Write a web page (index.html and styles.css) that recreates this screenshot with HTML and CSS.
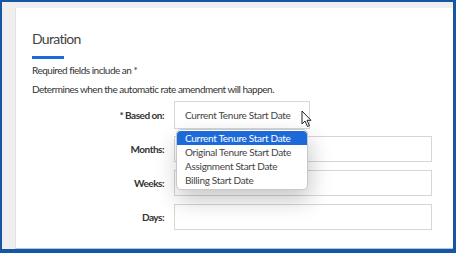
FILE: index.html
```html
<!DOCTYPE html>
<html lang="en">
<head>
  <meta charset="UTF-8" />
  <title>Duration</title>
  <link rel="stylesheet" href="styles.css">
</head>
<body>
  <div class="frame">
    <div class="card">
      <h2 class="title">Duration</h2>
      <div class="title-bar"></div>
      <p class="note">Required fields include an *</p>
      <p class="note">Determines when the automatic rate amendment will happen.</p>

      <div class="form">
        <label class="label">* Based on:</label>
        <div class="select-wrap">
          <div class="select">Current Tenure Start Date</div>
          <svg class="cursor" width="12" height="18" viewBox="0 0 12 18">
            <path d="M1 1 L1 14 L4 11 L6.5 16.5 L8.5 15.6 L6 10.3 L10 10.3 Z" fill="#fff" stroke="#222" stroke-width="1" stroke-linejoin="round"/>
          </svg>
          <ul class="options">
            <li class="active">Current Tenure Start Date</li>
            <li>Original Tenure Start Date</li>
            <li>Assignment Start Date</li>
            <li>Billing Start Date</li>
          </ul>
        </div>

        <label class="label">Months:</label>
        <div class="input"></div>

        <label class="label">Weeks:</label>
        <div class="input"></div>

        <label class="label">Days:</label>
        <div class="input"></div>
      </div>
    </div>
  </div>
</body>
</html>
```

FILE: styles.css
```css
:root {
  --blue-frame: #1656a4;
  --blue: #1c6ad8;
  --text: #333;
  --line: #d6d6d6;
}

* {
  box-sizing: border-box;
  margin: 0;
  padding: 0;
}

body {
  font-family: 'Lato', 'Liberation Sans', sans-serif;
  color: var(--text);
  background: var(--blue-frame);
}

.frame {
  width: 456px;
  height: 253px;
  border: 2px solid var(--blue-frame);
  border-right-width: 3px;
  border-bottom-width: 4px;
  background: #efefef;
  padding: 6px 0 0 13px;
}

.card {
  height: 100%;
  background: #fff;
  border-left: 1px solid #e2e2e2;
  border-bottom: 1px solid #a8c8ee;
  padding: 22px 0 0 16px;
}

.title {
  font-size: 14px;
  font-weight: 400;
  letter-spacing: -0.7px;
  color: #444;
  line-height: 18px;
}

.title-bar {
  width: 32px;
  height: 3px;
  background: var(--blue);
  margin-top: 8px;
}

.note {
  font-size: 10px;
  letter-spacing: -0.5px;
  line-height: 14px;
  margin-top: 4px;
}

.note + .note {
  margin-top: 5px;
}

.form {
  display: grid;
  grid-template-columns: 132px 258px;
  column-gap: 10px;
  row-gap: 8px;
  margin-top: 5px;
}

.label {
  text-align: right;
  font-size: 10px;
  letter-spacing: -0.5px;
  font-weight: 700;
  align-self: center;
}

.select-wrap {
  position: relative;
  height: 27px;
}

.select {
  width: 136px;
  height: 28px;
  border: 1px solid var(--line);
  font-size: 10px;
  letter-spacing: -0.3px;
  line-height: 26px;
  padding-left: 10px;
  color: #444;
}

.cursor {
  position: absolute;
  left: 127px;
  top: 9px;
}

.input {
  height: 26px;
  border: 1px solid var(--line);
}

.options {
  position: absolute;
  left: 2px;
  top: 28px;
  width: 132px;
  list-style: none;
  background: #fff;
  border: 1px solid #c8c8c8;
  border-radius: 5px;
  padding: 1px 0 2px;
  box-shadow: 2px 10px 22px rgba(0, 0, 0, 0.22);
  z-index: 2;
}

.options li {
  font-size: 10px;
  letter-spacing: -0.3px;
  line-height: 14px;
  padding-left: 8px;
  color: #444;
}

.options li.active {
  background: var(--blue);
  color: #fff;
  border-radius: 4px 4px 0 0;
}
```
